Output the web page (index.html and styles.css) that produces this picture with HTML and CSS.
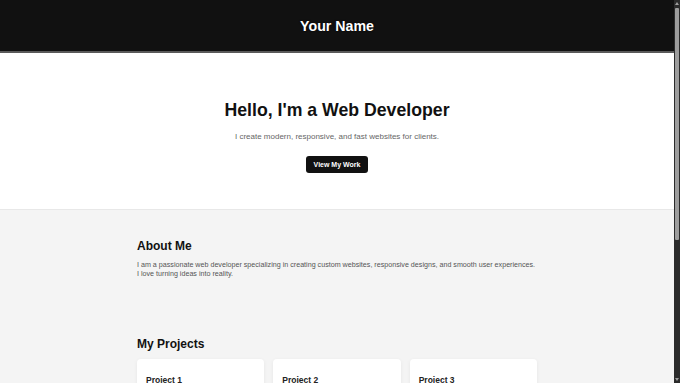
FILE: index.html
```html
<!DOCTYPE html>
<html lang="en">
<head>
<meta charset="utf-8">
<title>Your Name</title>
<link rel="stylesheet" href="styles.css">
</head>
<body>
<header class="site-header">
  <h1 class="site-title">Your Name</h1>
</header>
<section class="hero">
  <h2 class="hero-title">Hello, I'm a Web Developer</h2>
  <p class="hero-text">I create modern, responsive, and fast websites for clients.</p>
  <a class="btn" href="#projects">View My Work</a>
</section>
<main class="content">
  <section class="section about">
    <h2 class="section-title">About Me</h2>
    <p class="section-text">I am a passionate web developer specializing in creating custom websites, responsive designs, and smooth user experiences. I love turning ideas into reality.</p>
  </section>
  <section class="section projects" id="projects">
    <h2 class="section-title">My Projects</h2>
    <div class="cards">
      <div class="card"><h3 class="card-title">Project 1</h3><p class="card-text">A responsive business website.</p></div>
      <div class="card"><h3 class="card-title">Project 2</h3><p class="card-text">An e-commerce landing page.</p></div>
      <div class="card"><h3 class="card-title">Project 3</h3><p class="card-text">A personal portfolio template.</p></div>
    </div>
  </section>
  <section class="section contact">
    <h2 class="section-title">Contact</h2>
    <p class="section-text">Email: you@example.com</p>
  </section>
</main>
<div class="scrollbar" aria-hidden="true">
  <span class="sb-arrow sb-up"></span>
  <span class="sb-thumb"></span>
  <span class="sb-arrow sb-down"></span>
</div>
</body>
</html>
```

FILE: styles.css
```css
html { background: #f4f4f4; }

body {
  margin: 0;
  padding-right: 6px;
  font-family: "Liberation Sans", Arial, sans-serif;
  background: #f4f4f4;
  color: #111;
}

.site-header {
  background: #111;
  height: 51px;
  border-bottom: 2px solid #5a5a5a;
  display: flex;
  align-items: center;
  justify-content: center;
}
.site-title {
  margin: 0;
  font-size: 14.2px;
  font-weight: bold;
  color: #fff;
  text-shadow: 0 0 2px #000;
}

.hero {
  background: #fff;
  text-align: center;
  padding: 46px 0 36px;
  border-bottom: 1px solid #e8e8e8;
}
.hero-title {
  margin: 0;
  font-size: 17.7px;
  font-weight: bold;
  color: #111;
  line-height: 22px;
}
.hero-text {
  margin: 10px 0 10px;
  font-size: 8px;
  color: #666;
  line-height: 12px;
}
.btn {
  display: inline-block;
  background: #111;
  color: #fff;
  font-size: 7px;
  font-weight: bold;
  text-decoration: none;
  padding: 0 8px;
  height: 17px;
  line-height: 17px;
  border-radius: 3px;
}

.content {
  width: 400px;
  margin: 0 auto;
}
.section { padding-top: 29px; }
.section-title {
  margin: 0;
  font-size: 12px;
  font-weight: bold;
  line-height: 14px;
}
.section-text {
  margin: 8px 0 0;
  font-size: 7.15px;
  line-height: 9px;
  color: #555;
}
.projects { padding-top: 58px; }
.cards {
  display: grid;
  grid-template-columns: repeat(3, 1fr);
  gap: 9px;
  margin-top: 8px;
}
.card {
  background: #fff;
  border-radius: 4px;
  box-shadow: 0 1px 4px rgba(0,0,0,0.06);
  padding: 16px 9px 14px;
}
.card-title {
  margin: 0;
  font-size: 8.5px;
  font-weight: bold;
  color: #222;
  line-height: 10px;
}
.card-text {
  margin: 6px 0 0;
  font-size: 7px;
  color: #555;
}
.contact { padding-bottom: 160px; }

.scrollbar {
  position: fixed;
  top: 0;
  right: 0;
  width: 6px;
  height: 100vh;
  background: #2b2b2b;
  display: flex;
  flex-direction: column;
  align-items: center;
}
.sb-arrow {
  width: 0;
  height: 0;
  border-left: 2px solid transparent;
  border-right: 2px solid transparent;
}
.sb-up { border-bottom: 3px solid #9d9d9d; margin-top: 2px; }
.sb-down { border-top: 3px solid #9d9d9d; margin-top: auto; margin-bottom: 2px; }
.sb-thumb {
  width: 4px;
  height: 232px;
  margin-top: 3px;
  background: #9d9d9d;
  border-radius: 1px;
}
```
